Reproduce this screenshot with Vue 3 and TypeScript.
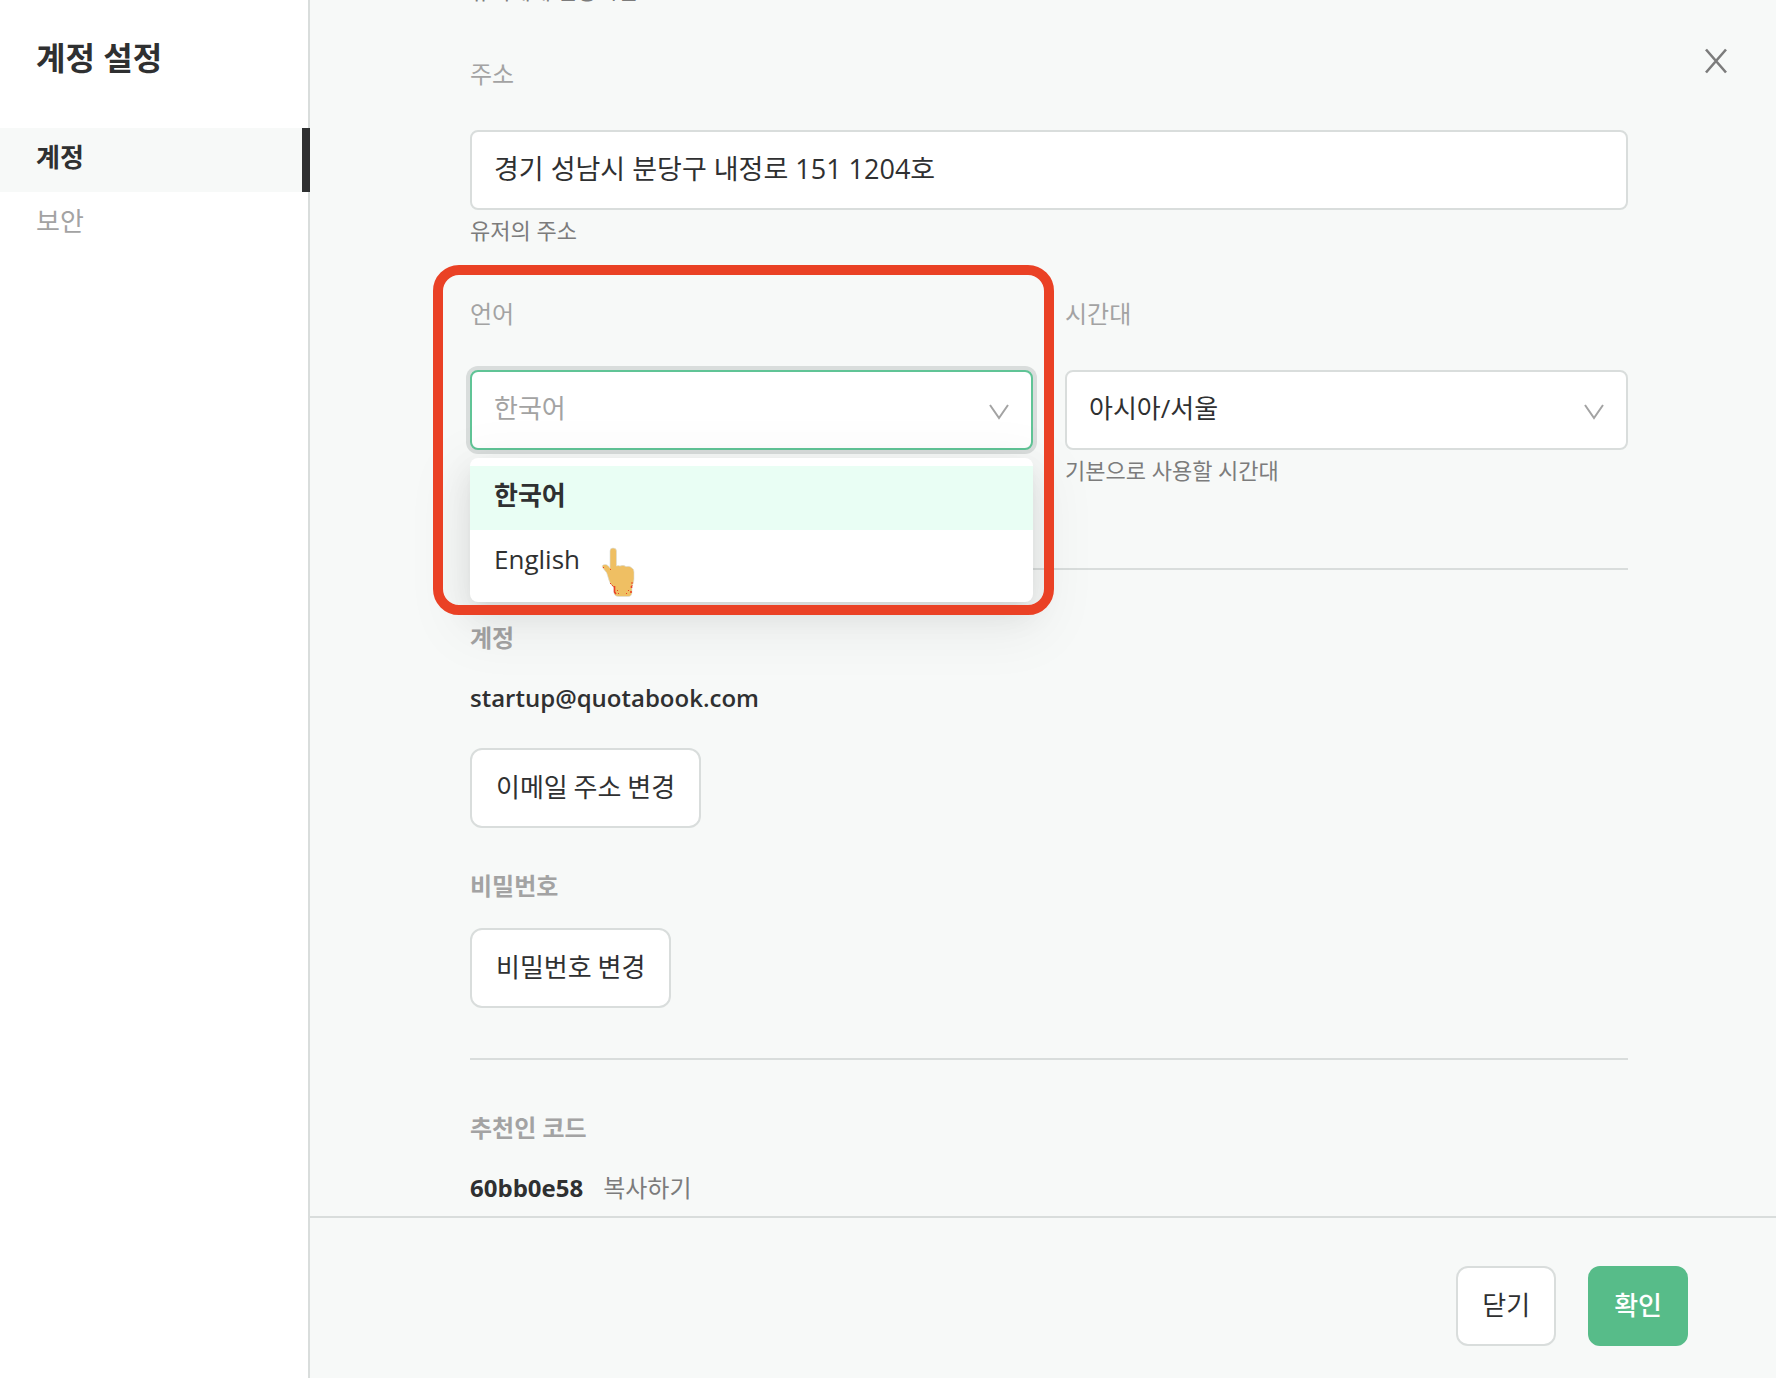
<script setup lang="ts">
import { ref } from 'vue'

const navItems = [
  { id: 'account', label: '계정' },
  { id: 'security', label: '보안' },
]
const activeNav = ref('account')

const address = ref('경기 성남시 분당구 내정로 151 1204호')
const languages = ['한국어', 'English']
const language = ref('한국어')
const timezone = ref('아시아/서울')
</script>

<template>
  <div class="layout">
    <aside class="sidebar">
      <h1 class="title">계정 설정</h1>
      <nav class="nav">
        <a
          v-for="item in navItems"
          :key="item.id"
          href="#"
          class="nav-item"
          :class="{ active: item.id === activeNav }"
          @click.prevent="activeNav = item.id"
        >{{ item.label }}</a>
      </nav>
    </aside>

    <main class="main">
      <button class="close" type="button" aria-label="닫기">
        <svg width="24" height="26" viewBox="0 0 24 26" fill="none" stroke="#7c7c7c" stroke-width="2.6">
          <path d="M2 1.5 L22 24.5 M22 1.5 L2 24.5" />
        </svg>
      </button>

      <div class="content">
        <p class="hint previous">유저에게 연동시킨</p>

        <div class="field">
          <label class="label" for="address">주소</label>
          <input id="address" v-model="address" class="control address" type="text" />
          <p class="hint">유저의 주소</p>
        </div>

        <div class="row">
          <div class="field">
            <label class="label" for="language">언어</label>
            <div class="select-box">
              <select id="language" v-model="language" class="control focused">
                <option v-for="l in languages" :key="l">{{ l }}</option>
              </select>
              <svg class="chevron" width="20" height="16" viewBox="0 0 20 16" fill="none" stroke="#a3a3a3" stroke-width="2">
                <path d="M1 1 L10 14 L19 1" />
              </svg>
              <ul class="dropdown" role="listbox" aria-label="언어">
                <li
                  v-for="l in languages"
                  :key="l"
                  class="option"
                  :class="{ selected: l === language }"
                  role="option"
                  :aria-selected="l === language"
                  @click="language = l"
                >{{ l }}</li>
              </ul>
              <div class="highlight"></div>
              <svg class="pointer" width="34" height="50" viewBox="0 0 34 50">
                <path
                  fill="#efbf63"
                  stroke="#d9dddc"
                  stroke-width="0.6"
                  d="M9 4 Q9 1 12 1 Q15.5 1 15.5 4 V19 Q17 18 19 19 Q22 17.500 25 19.500 Q29 18.500 31 21 Q33 22 33 25 V32 Q33 36 31 39 V45 Q31 49.500 27 49.500 H18 Q13 49.500 13 45 V41 Q8 36 7 30 Q6 25 3 22.500 Q0 19 2 18 Q6 16 9 21 Z"
                />
                <path fill="none" stroke="#ea4125" stroke-width="1" stroke-dasharray="2 1" d="M9 36 L14 41 M31 35 V39" />
                <path fill="none" stroke="#ea4125" stroke-width="1.600" d="M13.500 39 V45 L15 47 M30.500 39 V41 M30 44 V46" />
                <path fill="#ea4125" d="M2 20h1v1h-1z M9 22h1v1h-1z M16 43h1v1h-1z M27 43h1v1h-1z M25 46h1v1h-1z M17 46h1v1h-1z" />
              </svg>
            </div>
          </div>
          <div class="field">
            <label class="label" for="timezone">시간대</label>
            <div class="select-box">
              <select id="timezone" v-model="timezone" class="control">
                <option>아시아/서울</option>
              </select>
              <svg class="chevron" width="20" height="16" viewBox="0 0 20 16" fill="none" stroke="#a3a3a3" stroke-width="2">
                <path d="M1 1 L10 14 L19 1" />
              </svg>
            </div>
            <p class="hint">기본으로 사용할 시간대</p>
          </div>
        </div>

        <hr class="divider" />

        <section class="section">
          <h2 class="heading">계정</h2>
          <p class="value">startup@quotabook.com</p>
          <button class="btn" type="button">이메일 주소 변경</button>
        </section>
        <section class="section password">
          <h2 class="heading">비밀번호</h2>
          <button class="btn" type="button">비밀번호 변경</button>
        </section>

        <hr class="divider" />

        <section class="section">
          <h2 class="heading">추천인 코드</h2>
          <p class="value code">
            60bb0e58
            <button class="copy" type="button">복사하기</button>
          </p>
        </section>
      </div>

      <footer class="footer">
        <button class="btn" type="button">닫기</button>
        <button class="btn primary" type="button">확인</button>
      </footer>
    </main>
  </div>
</template>

<style>
body {
  margin: 0;
  background: #f7f9f8;
}
</style>

<style scoped>
.layout,
.layout * {
  box-sizing: border-box;
}

.layout {
  display: flex;
  min-height: 100vh;
  overflow: hidden;
  color: #2f3031;
  font-family: 'Open Sans', 'Noto Sans CJK KR', sans-serif;
  font-size: 26px;
  line-height: 40px;
}

button,
input,
select {
  font: inherit;
  color: inherit;
}

.sidebar {
  flex: none;
  width: 310px;
  border-right: 2px solid #d9dddc;
  background: #fff;
}

.title {
  margin: 0;
  padding: 34px 36px 46px;
  font-size: 32px;
  font-weight: 700;
  line-height: 48px;
}

.nav {
  display: flex;
  flex-direction: column;
  margin-right: -2px;
}

.nav-item {
  padding: 9px 36px 15px;
  color: #a3a3a3;
  text-decoration: none;
}

.nav-item.active {
  border-right: 8px solid #2f3031;
  background: #f7f9f8;
  color: #2f3031;
  font-weight: 700;
}

.main {
  position: relative;
  display: flex;
  flex: 1;
  flex-direction: column;
  min-width: 0;
  background: #f7f9f8;
}

.close {
  position: absolute;
  top: 41px;
  right: 40px;
  display: flex;
  align-items: center;
  justify-content: center;
  width: 40px;
  height: 40px;
  padding: 0;
  border: 0;
  background: none;
}

.content {
  flex: 1;
  margin-top: -26px;
  padding: 0 148px 0 160px;
}

.field {
  display: flex;
  flex: 1;
  flex-direction: column;
  min-width: 0;
}

.label {
  margin-bottom: 36px;
  color: #a3a3a3;
  font-size: 24px;
  line-height: 40px;
}

.control {
  width: 100%;
  height: 80px;
  padding: 0 22px 4px;
  border: 2px solid #d9dddc;
  border-radius: 8px;
  outline: none;
  background: #fff;
  appearance: none;
}

.control.address {
  padding-bottom: 6px;
  font-size: 27px;
}

.control.focused {
  border-color: #60c496;
  box-shadow: 0 0 0 4px #d9dddc;
  color: #a3a3a3;
}

.hint {
  margin: 4px 0 0;
  color: #7c7c7c;
  font-size: 22px;
  line-height: 32px;
}

.hint.previous {
  margin: 0 0 48px;
}

.row {
  display: flex;
  gap: 32px;
  margin-top: 48px;
}

.select-box {
  position: relative;
}

.chevron {
  position: absolute;
  top: 34px;
  right: 24px;
  pointer-events: none;
}

.dropdown {
  position: absolute;
  top: 88px;
  left: 0;
  width: 100%;
  margin: 0;
  padding: 8px 0;
  border-radius: 8px;
  background: #fff;
  box-shadow:
    0 6px 12px -8px rgba(0, 0, 0, 0.12),
    0 12px 32px rgba(0, 0, 0, 0.08),
    0 18px 56px 16px rgba(0, 0, 0, 0.05);
  list-style: none;
}

.option {
  padding: 9px 24px 15px;
}

.option.selected {
  background: #e9fef4;
  font-weight: 700;
}

.highlight {
  position: absolute;
  top: -105px;
  right: -21px;
  left: -37px;
  height: 350px;
  border: 10px solid #ea4125;
  border-radius: 26px;
  pointer-events: none;
}

.pointer {
  position: absolute;
  top: 177px;
  left: 131px;
  pointer-events: none;
}

.divider {
  height: 2px;
  margin: 82px 0 48px;
  border: 0;
  background: #d9dddc;
}

.section {
  display: flex;
  flex-direction: column;
  align-items: flex-start;
  font-size: 24px;
}

.section.password {
  margin-top: 38px;
}

.password .heading {
  margin-bottom: 22px;
}

.password + .divider {
  margin-top: 50px;
}

.heading {
  margin: 0 0 20px;
  color: #a3a3a3;
  font-size: 24px;
  font-weight: 700;
  line-height: 40px;
}

.value {
  margin: 0 0 30px;
  font-weight: 600;
}

.value.code {
  display: flex;
  gap: 20px;
  margin-bottom: 8px;
  font-weight: 700;
}

.copy {
  padding: 0;
  border: 0;
  background: none;
  color: #7c7c7c;
  font-weight: 400;
}

.btn {
  height: 80px;
  padding: 0 24px 4px;
  border: 2px solid #d9dddc;
  border-radius: 12px;
  background: #fff;
  font-family: 'Noto Sans CJK KR', sans-serif;
  font-size: 26px;
}

.footer {
  display: flex;
  justify-content: flex-end;
  gap: 32px;
  padding: 48px 88px 32px;
  border-top: 2px solid #d9dddc;
}

.primary {
  border-color: #57bc89;
  background: #57bc89;
  color: #fff;
  font-weight: 500;
}
</style>
